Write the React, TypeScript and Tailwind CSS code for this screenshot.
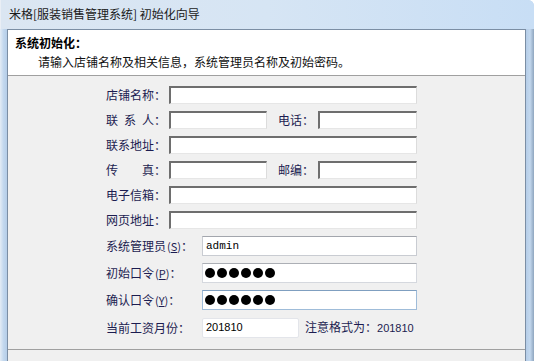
import React from "react";

const F = { fontFamily: "'Noto Sans CJK SC', 'Noto Sans', sans-serif" };

function Sunken({ w }: { w: string }) {
  return (
    <div
      className={`${w} h-[18px] bg-white border-t-2 border-l-2 border-t-[#6e6e6e] border-l-[#6e6e6e] border-r border-b border-r-[#dcdcdc] border-b-[#e6e6e6]`}
    />
  );
}

function Lbl({ chars }: { chars: string[] }) {
  return (
    <div className="flex items-center text-[12px] leading-[18px] text-[#1c1c50]">
      <div className="w-[48px] flex justify-between">
        {chars.map((c, i) => (
          <span key={i}>{c}</span>
        ))}
      </div>
      <span className="w-[12px]">：</span>
    </div>
  );
}

function Dots() {
  return (
    <div className="flex items-center gap-[2px] pl-[2px]">
      {[0, 1, 2, 3, 4, 5].map((i) => (
        <span key={i} className="w-[10px] h-[10px] rounded-full bg-black" />
      ))}
    </div>
  );
}

function Acc({ t, k }: { t: string; k: string }) {
  return (
    <div className="w-[96px] flex items-center text-[12px] leading-[20px] text-[#1c1c50]">
      <span>{t}</span>
      <span className="text-[11px] ml-[1px]">
        (<span className="underline">{k}</span>)
      </span>
      <span>：</span>
    </div>
  );
}

export default function App() {
  return (
    <div
      className="w-[534px] h-[361px] overflow-hidden bg-[#bfd5ec] rounded-tr-[6px] flex flex-col"
      style={F}
    >
      <div className="h-[29px] shrink-0 bg-gradient-to-r from-[#dbe6f2] via-[#d6e5f4] to-[#c8def5] pl-[8px] pt-[6px] text-[12px] leading-[16px] text-[#1a1a1a] border-l border-[#e9eef5]">
        米格[服装销售管理系统] 初始化向导
      </div>
      <div className="flex-1 flex min-h-0">
        <div className="w-[7px] shrink-0 bg-gradient-to-r from-[#e4ecf5] via-[#c3d8ee] to-[#b5cde8]" />
        <div className="w-[519px] shrink-0 flex flex-col border border-[#7b8ea4] border-b-0">
          <div className="h-[46px] shrink-0 bg-white border-b border-[#a0a0a0] pt-[5px]">
            <div className="pl-[7px] text-[12px] leading-[16px] font-bold text-black">系统初始化：</div>
            <div className="pl-[30px] mt-[3px] text-[12px] leading-[16px] text-[#111]">
              请输入店铺名称及相关信息，系统管理员名称及初始密码。
            </div>
          </div>
          <div className="h-[273px] shrink-0 bg-[#f0f0f0] pt-[10px] pl-[98px] flex flex-col gap-[7px]">
            <div className="flex items-center gap-[3px]">
              <Lbl chars={["店", "铺", "名", "称"]} />
              <Sunken w="w-[248px]" />
            </div>
            <div className="flex items-center gap-[3px]">
              <Lbl chars={["联", "系", "人"]} />
              <Sunken w="w-[98px]" />
              <div className="ml-[8px] w-[37px] text-[12px] leading-[18px] text-[#1c1c50]">电话：</div>
              <Sunken w="w-[99px]" />
            </div>
            <div className="flex items-center gap-[3px]">
              <Lbl chars={["联", "系", "地", "址"]} />
              <Sunken w="w-[248px]" />
            </div>
            <div className="flex items-center gap-[3px]">
              <Lbl chars={["传", "真"]} />
              <Sunken w="w-[98px]" />
              <div className="ml-[8px] w-[37px] text-[12px] leading-[18px] text-[#1c1c50]">邮编：</div>
              <Sunken w="w-[99px]" />
            </div>
            <div className="flex items-center gap-[3px]">
              <Lbl chars={["电", "子", "信", "箱"]} />
              <Sunken w="w-[248px]" />
            </div>
            <div className="flex items-center gap-[3px]">
              <Lbl chars={["网", "页", "地", "址"]} />
              <Sunken w="w-[248px]" />
            </div>
            <div className="flex items-center">
              <Acc t="系统管理员" k="S" />
              <div className="w-[215px] h-[20px] bg-white border border-[#c9ccd2] border-t-[#a3a6ad] flex items-center pl-[3px] text-[11px] text-black" style={{ fontFamily: "'Liberation Mono', monospace" }}>
                admin
              </div>
            </div>
            <div className="flex items-center">
              <Acc t="初始口令" k="P" />
              <div className="w-[215px] h-[20px] bg-white border border-[#d5d8de] border-t-[#acafb5] flex items-center">
                <Dots />
              </div>
            </div>
            <div className="flex items-center">
              <Acc t="确认口令" k="Y" />
              <div className="w-[215px] h-[20px] bg-white border border-[#9fbcd9] border-t-[#7f9fc0] flex items-center">
                <Dots />
              </div>
            </div>
            <div className="flex items-center">
              <div className="w-[96px] text-[12px] leading-[20px] text-[#1c1c50]">当前工资月份：</div>
              <div className="w-[97px] h-[20px] bg-white border border-[#e3e5ea] rounded-[2px] flex items-center pl-[3px] text-[11px] text-black" style={{ fontFamily: "'Liberation Sans', sans-serif" }}>
                201810
              </div>
              <div className="ml-[6px] text-[12px] leading-[20px] text-[#1c1c50]">
                注意格式为：<span style={{ fontFamily: "'Liberation Sans', sans-serif" }} className="text-[11px]">201810</span>
              </div>
            </div>
          </div>
          <div className="flex-1 bg-[#f0f0f0] border-t border-[#a0a0a0]" />
        </div>
        <div className="flex-1 bg-gradient-to-r from-[#b5cde8] via-[#c3d8ee] to-[#8fa6bf]" />
      </div>
    </div>
  );
}
